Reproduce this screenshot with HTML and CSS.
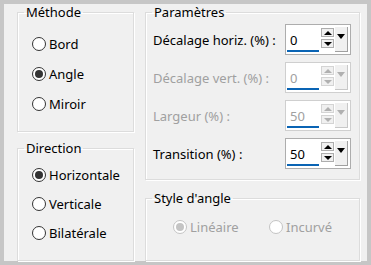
FILE: index.html
```html
<!DOCTYPE html>
<html lang="fr">
<head>
    <meta charset="UTF-8">
    <title>Angle</title>
    <link rel="stylesheet" href="styles.css">
</head>
<body>
    <div class="dialog">
        <div class="col col-left">
            <fieldset class="group methode">
                <legend>Méthode</legend>
                <div class="group-body">
                    <div class="radio"><span class="dot"></span>Bord</div>
                    <div class="radio checked"><span class="dot"></span>Angle</div>
                    <div class="radio"><span class="dot"></span>Miroir</div>
                </div>
            </fieldset>
            <fieldset class="group direction">
                <legend>Direction</legend>
                <div class="group-body">
                    <div class="radio checked"><span class="dot"></span>Horizontale</div>
                    <div class="radio"><span class="dot"></span>Verticale</div>
                    <div class="radio"><span class="dot"></span>Bilatérale</div>
                </div>
            </fieldset>
        </div>
        <div class="col col-right">
            <fieldset class="group params">
                <legend>Paramètres</legend>
                <div class="group-body">
                    <div class="row">
                        <span class="row-label">Décalage horiz. (%) :</span>
                        <div class="spin">
                            <div class="spin-value">0</div>
                            <div class="spin-arrows"><span class="arrow up"></span><span class="arrow down"></span></div>
                            <div class="spin-drop"><span class="tri"></span></div>
                        </div>
                    </div>
                    <div class="row disabled">
                        <span class="row-label">Décalage vert. (%) :</span>
                        <div class="spin">
                            <div class="spin-value">0</div>
                            <div class="spin-arrows"><span class="arrow up"></span><span class="arrow down"></span></div>
                            <div class="spin-drop"><span class="tri"></span></div>
                        </div>
                    </div>
                    <div class="row disabled">
                        <span class="row-label">Largeur (%) :</span>
                        <div class="spin">
                            <div class="spin-value">50</div>
                            <div class="spin-arrows"><span class="arrow up"></span><span class="arrow down"></span></div>
                            <div class="spin-drop"><span class="tri"></span></div>
                        </div>
                    </div>
                    <div class="row">
                        <span class="row-label">Transition (%) :</span>
                        <div class="spin">
                            <div class="spin-value">50</div>
                            <div class="spin-arrows"><span class="arrow up"></span><span class="arrow down"></span></div>
                            <div class="spin-drop"><span class="tri"></span></div>
                        </div>
                    </div>
                </div>
            </fieldset>
            <fieldset class="group style">
                <legend>Style d'angle</legend>
                <div class="group-body radio-line">
                    <div class="radio checked disabled lineaire"><span class="dot"></span>Linéaire</div>
                    <div class="radio disabled"><span class="dot"></span>Incurvé</div>
                </div>
            </fieldset>
        </div>
    </div>
</body>
</html>
```

FILE: styles.css
```css
body { margin: 0; font-family: "Noto Sans", "Open Sans", sans-serif; font-size: 13px; color: #000; }
.dialog { width: 371px; height: 265px; box-sizing: border-box; border: 4px solid #c6c6c6; background: #f0f0f0; display: flex; gap: 11px; padding-left: 13px; }
.col { display: flex; flex-direction: column; }
.col-left { width: 117px; }
.col-right { width: 215px; }

.group { margin: 0; padding: 0; min-width: 0; box-sizing: border-box; border: 1px solid #dcdcdc; box-shadow: inset 1px 1px 0 #fff, 1px 1px 0 #fff; }
.group legend { margin-left: 6px; padding: 0 2px; line-height: 16px; }

.methode { height: 128px; }
.methode .group-body { padding: 9px 0 0 14px; }
.direction { margin-top: 8px; height: 121px; }
.direction .group-body { padding: 4px 0 0 14px; }
.params { height: 176px; }
.params .group-body { padding: 4px 8px 0 7px; }
.style { margin-top: 10px; height: 71px; }
.style .group-body { padding: 6px 0 0 27px; }

.radio { display: flex; align-items: center; height: 30px; }
.direction .radio { height: 29px; }
.dot { width: 14px; height: 14px; box-sizing: border-box; border: 1px solid #333; border-radius: 50%; background: #fff; margin-right: 3px; display: flex; align-items: center; justify-content: center; }
.checked .dot::after { content: ""; width: 8px; height: 8px; border-radius: 50%; background: #333; }
.radio.disabled { color: #a0a0a0; }
.radio.disabled .dot { border-color: #c4c4c4; }
.radio.disabled.checked .dot::after { background: #c4c4c4; }
.radio-line { display: flex; }
.lineaire { width: 96px; }

.row { display: flex; align-items: center; justify-content: space-between; height: 31px; margin-bottom: 7px; }
.row.disabled { color: #a0a0a0; }
.spin { width: 66px; height: 31px; box-sizing: border-box; border: 1px solid #adadad; background: #fff; display: flex; }
.spin-value { width: 33px; box-sizing: border-box; padding: 7px 0 0 4px; position: relative; line-height: 16px; }
.spin-value::after { content: ""; position: absolute; left: 1px; right: 0; bottom: 2px; height: 2px; background: #0a64b4; }
.spin-arrows { margin-left: 2px; padding-top: 3px; display: flex; flex-direction: column; gap: 2px; }
.arrow { width: 13px; height: 9px; box-sizing: border-box; border: 1px solid #adadad; background: #f0f0f0; display: flex; align-items: center; justify-content: center; }
.arrow::after { content: ""; border-left: 4px solid transparent; border-right: 4px solid transparent; }
.up::after { border-bottom: 4px solid #000; }
.down::after { border-top: 4px solid #000; }
.spin-drop { margin: 2px 0 2px 1px; width: 13px; box-sizing: border-box; background: #f0f0f0; border-right: 1px solid #a0a0a0; border-bottom: 1px solid #a0a0a0; display: flex; justify-content: center; padding-top: 7px; }
.tri { width: 0; height: 0; border-left: 4px solid transparent; border-right: 4px solid transparent; border-top: 5px solid #000; }
.disabled .spin { border-color: #cfcfcf; }
.disabled .up::after { border-bottom-color: #b0b0b0; }
.disabled .down::after { border-top-color: #b0b0b0; }
.disabled .arrow { border-color: #d4d4d4; }
.disabled .tri { border-top-color: #b0b0b0; }
.disabled .spin-drop { border-color: #c8c8c8; }
```
